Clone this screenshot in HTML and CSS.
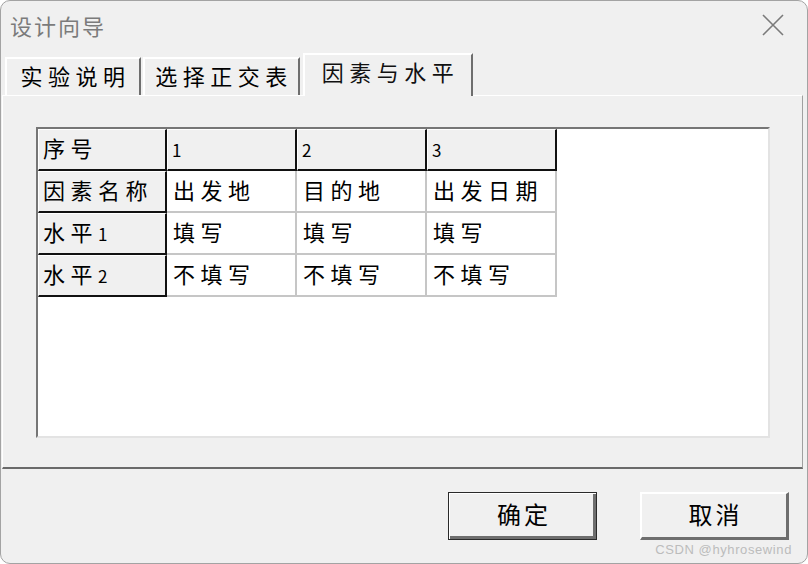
FILE: index.html
```html
<!DOCTYPE html>
<html lang="zh">
<head>
<meta charset="utf-8">
<title>设计向导</title>
<link rel="stylesheet" href="styles.css">
</head>
<body>
<div class="window">
  <div class="titlebar">
    <span class="title">设计向导</span>
    <svg class="close" width="22" height="22" viewBox="0 0 22 22"><path d="M1 1 L21 21 M21 1 L1 21" stroke="#7a7a7a" stroke-width="1.6" fill="none"/></svg>
  </div>
  <div class="tabs">
    <div class="tab tab1">实验说明</div>
    <div class="tab tab2">选择正交表</div>
    <div class="tab active">因素与水平</div>
  </div>
  <div class="panel">
    <div class="gridbox">
      <div class="table">
        <div class="cell head">序号</div>
        <div class="cell head"><span class="num">1</span></div>
        <div class="cell head"><span class="num">2</span></div>
        <div class="cell head"><span class="num">3</span></div>

        <div class="cell head">因素名称</div>
        <div class="cell">出发地</div>
        <div class="cell">目的地</div>
        <div class="cell">出发日期</div>

        <div class="cell head">水平<span class="num">1</span></div>
        <div class="cell">填写</div>
        <div class="cell">填写</div>
        <div class="cell">填写</div>

        <div class="cell head">水平<span class="num">2</span></div>
        <div class="cell">不填写</div>
        <div class="cell">不填写</div>
        <div class="cell">不填写</div>
      </div>
    </div>
  </div>
  <div class="footer">
    <button class="btn default">确定</button>
    <button class="btn">取消</button>
    <span class="watermark">CSDN @hyhrosewind</span>
  </div>
</div>
</body>
</html>
```

FILE: styles.css
```css
html, body {
  margin: 0;
  padding: 0;
  background: #ffffff;
}
body {
  width: 808px;
  height: 564px;
  overflow: hidden;
  font-family: "Noto Sans CJK SC", "Noto Sans", sans-serif;
}
.window {
  position: relative;
  box-sizing: border-box;
  width: 808px;
  height: 564px;
  border: 1px solid #a3a3a3;
  border-radius: 10px;
  background: #f0f0f0;
  display: flex;
  flex-direction: column;
  overflow: hidden;
}
.titlebar {
  height: 52px;
  display: flex;
  align-items: center;
  justify-content: space-between;
  padding: 0 23px 0 9px;
  box-sizing: border-box;
}
.title {
  font-size: 22px;
  letter-spacing: 2px;
  color: #7b7b7b;
  line-height: 1;
  margin-top: -4px;
}
.close {
  display: block;
  margin-top: -4px;
}
.tabs {
  height: 42px;
  display: flex;
  align-items: flex-end;
  padding-left: 4px;
  position: relative;
  z-index: 1;
}
.tab {
  box-sizing: border-box;
  height: 38px;
  border-top: 2px solid #ffffff;
  border-left: 2px solid #ffffff;
  border-right: 2px solid #6e6e6e;
  display: flex;
  align-items: center;
  justify-content: center;
  font-size: 22px;
  letter-spacing: 5.5px;
  text-indent: 5px;
  color: #000;
  line-height: 1;
  padding-bottom: 5px;
}
.tab1 { width: 136px; margin-right: 2px; }
.tab2 { width: 157px; margin-right: 3px; }
.tab.active {
  width: 170px;
  height: 43px;
  margin-bottom: -1px;
  background: #f0f0f0;
  padding-bottom: 10px;
  color: #111;
}
.panel {
  box-sizing: border-box;
  height: 374px;
  margin: 0 4px 0 1px;
  border-top: 1px solid #ffffff;
  border-left: 1px solid #ffffff;
  border-right: 1px solid #a0a0a0;
  border-bottom: 2px solid #6a6a6a;
  padding: 31px 0 0 33px;
}
.gridbox {
  box-sizing: border-box;
  width: 734px;
  height: 311px;
  background: #ffffff;
  border-top: 2px solid #767676;
  border-left: 2px solid #767676;
  border-right: 2px solid #e3e3e3;
  border-bottom: 2px solid #e3e3e3;
}
.table {
  display: grid;
  grid-template-columns: 129px 130px 130px 130px;
  grid-auto-rows: 42px;
}
.cell {
  box-sizing: border-box;
  background: #ffffff;
  border-right: 2px solid #c6c6c6;
  border-bottom: 2px solid #c6c6c6;
  display: flex;
  align-items: center;
  padding-left: 6px;
  padding-bottom: 5px;
  font-size: 22px;
  letter-spacing: 5.5px;
  color: #000;
  line-height: 1;
}
.cell.head {
  background: #f0f0f0;
  border-top: 1px solid #ffffff;
  border-left: 1px solid #ffffff;
  border-right: 2px solid #111111;
  border-bottom: 2px solid #111111;
  padding-left: 4px;
}
.num {
  font-size: 17px;
  letter-spacing: 0;
  position: relative;
  top: 2px;
}
.footer {
  flex: 1;
  display: flex;
  justify-content: flex-end;
  align-items: flex-start;
  gap: 43px;
  padding: 23px 18px 0 0;
}
.btn {
  box-sizing: border-box;
  width: 149px;
  height: 48px;
  background: #f0f0f0;
  border-top: 2px solid #ffffff;
  border-left: 2px solid #ffffff;
  border-right: 3px solid #6e6e6e;
  border-bottom: 3px solid #6e6e6e;
  font-family: "Noto Sans CJK SC", sans-serif;
  font-size: 24px;
  letter-spacing: 3px;
  text-indent: 3px;
  color: #000;
  padding: 0 0 4px 0;
  line-height: 1;
}
.btn.default {
  border: 1px solid #2a2a2a;
  box-shadow: inset 1px 1px 0 #ffffff, inset -3px -3px 0 #6e6e6e;
}
.watermark {
  position: absolute;
  right: 15px;
  bottom: 6px;
  font-family: "Liberation Sans", sans-serif;
  font-size: 13px;
  letter-spacing: 0.6px;
  color: #bcbcbc;
}
```
